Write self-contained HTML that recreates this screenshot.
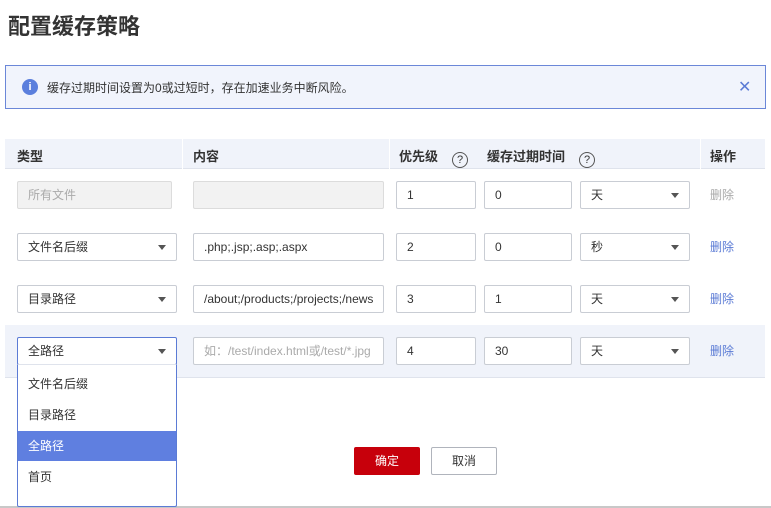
<!DOCTYPE html>
<html><head><meta charset="utf-8"><style>
*{box-sizing:border-box;margin:0;padding:0}
body{width:771px;height:508px;overflow:hidden;background:#fff;font-family:"Liberation Sans","Noto Sans CJK SC",sans-serif;color:#333;position:relative;font-size:12px}
.a{position:absolute}
.in{position:absolute;height:28px;border:1px solid #c9cdd4;background:#fff;line-height:26px;padding-left:10px;font-size:12px;color:#333;border-radius:2px;white-space:nowrap;overflow:hidden}
.dis{background:#f2f2f2;border-color:#dcdcdc;color:#aaa}
.arr{position:absolute;right:10px;top:11px;width:0;height:0;border-left:4px solid transparent;border-right:4px solid transparent;border-top:5px solid #555}
.del{position:absolute;left:710px;color:#5b7bd5;font-size:12px}
.hd{position:absolute;top:146px;font-size:13px;font-weight:600;color:#333;white-space:nowrap}
.q{display:inline-block;width:16px;height:16px;border:1px solid #555;border-radius:50%;text-align:center;line-height:14px;font-size:11px;font-weight:normal;margin-left:14px;vertical-align:-2px}
.it{position:absolute;left:18px;width:158px;height:30px;line-height:30px;padding-left:10px;font-size:12px;color:#333}
</style></head><body>
<div class="a" style="left:8px;top:9px;font-size:22px;font-weight:bold;color:#333">配置缓存策略</div>
<div class="a" style="left:5px;top:65px;width:761px;height:44px;background:#f1f4fc;border:1px solid #6b87d8"></div>
<div class="a" style="left:22px;top:79px;width:16px;height:16px;border-radius:50%;background:#5b7fdd;color:#fff;font-size:11px;font-weight:bold;text-align:center;line-height:16px">i</div>
<div class="a" style="left:47px;top:79px;font-size:12px;color:#333">缓存过期时间设置为0或过短时，存在加速业务中断风险。</div>
<div class="a" style="left:738px;top:77px;font-size:16px;color:#5b7bd5">✕</div>

<div class="a" style="left:5px;top:139px;width:760px;height:30px;background:#f0f3fa;border-bottom:1px solid #dfe3ec"></div>
<div class="a" style="left:182px;top:139px;width:1px;height:30px;background:#fff"></div>
<div class="a" style="left:389px;top:139px;width:1px;height:30px;background:#fff"></div>
<div class="a" style="left:700px;top:139px;width:1px;height:30px;background:#fff"></div>
<div class="hd" style="left:17px">类型</div>
<div class="hd" style="left:193px">内容</div>
<div class="hd" style="left:399px">优先级<span class="q">?</span></div>
<div class="hd" style="left:487px">缓存过期时间<span class="q">?</span></div>
<div class="hd" style="left:710px">操作</div>

<div class="in dis" style="left:17px;top:181px;width:155px">所有文件</div>
<div class="in dis" style="left:193px;top:181px;width:191px"></div>
<div class="in" style="left:396px;top:181px;width:80px">1</div>
<div class="in" style="left:484px;top:181px;width:88px">0</div>
<div class="in" style="left:580px;top:181px;width:110px">天<span class="arr"></span></div>
<div class="del" style="top:186px;color:#aaa">删除</div>

<div class="in" style="left:17px;top:233px;width:160px">文件名后缀<span class="arr"></span></div>
<div class="in" style="left:193px;top:233px;width:191px">.php;.jsp;.asp;.aspx</div>
<div class="in" style="left:396px;top:233px;width:80px">2</div>
<div class="in" style="left:484px;top:233px;width:88px">0</div>
<div class="in" style="left:580px;top:233px;width:110px">秒<span class="arr"></span></div>
<div class="del" style="top:238px">删除</div>

<div class="in" style="left:17px;top:285px;width:160px">目录路径<span class="arr"></span></div>
<div class="in" style="left:193px;top:285px;width:191px">/about;/products;/projects;/news</div>
<div class="in" style="left:396px;top:285px;width:80px">3</div>
<div class="in" style="left:484px;top:285px;width:88px">1</div>
<div class="in" style="left:580px;top:285px;width:110px">天<span class="arr"></span></div>
<div class="del" style="top:290px">删除</div>

<div class="a" style="left:5px;top:325px;width:760px;height:53px;background:#f0f3fa;border-bottom:1px solid #dfe3ec"></div>
<div class="in" style="left:17px;top:337px;width:160px;border-color:#5b7bd5">全路径<span class="arr"></span></div>
<div class="in" style="left:193px;top:337px;width:191px;color:#aaa">如：/test/index.html或/test/*.jpg</div>
<div class="in" style="left:396px;top:337px;width:80px">4</div>
<div class="in" style="left:484px;top:337px;width:88px">30</div>
<div class="in" style="left:580px;top:337px;width:110px">天<span class="arr"></span></div>
<div class="del" style="top:342px">删除</div>

<div class="a" style="left:354px;top:447px;width:66px;height:28px;background:#c7000b;color:#fff;text-align:center;line-height:28px;border-radius:2px">确定</div>
<div class="a" style="left:431px;top:447px;width:66px;height:28px;border:1px solid #b0b4bc;color:#333;text-align:center;line-height:26px;border-radius:2px;background:#fff">取消</div>

<div class="a" style="left:0;top:506px;width:771px;height:2px;background:#c8c8c8"></div>

<div class="a" style="left:17px;top:364px;width:160px;height:143px;background:#fff;border:1px solid #5b7bd5;border-top-color:#dfe3ec;border-radius:0 0 2px 2px"></div>
<div class="it" style="top:369px">文件名后缀</div>
<div class="it" style="top:400px">目录路径</div>
<div class="it" style="top:431px;background:#5f7fe0;color:#fff">全路径</div>
<div class="it" style="top:462px">首页</div>
</body></html>
